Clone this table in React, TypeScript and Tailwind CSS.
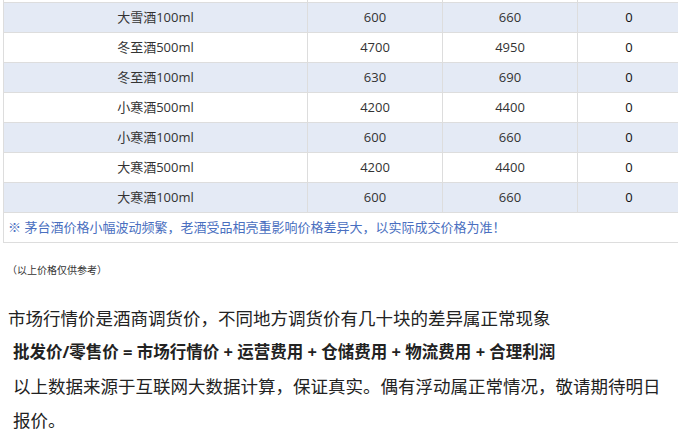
import React from 'react';

type Row = { name: string; a: string; b: string; c: string };

// first row is scrolled off the top; only its bottom border shows
const ROWS: Row[] = [
  { name: '', a: '', b: '', c: '' },
  { name: '大雪酒100ml', a: '600', b: '660', c: '0' },
  { name: '冬至酒500ml', a: '4700', b: '4950', c: '0' },
  { name: '冬至酒100ml', a: '630', b: '690', c: '0' },
  { name: '小寒酒500ml', a: '4200', b: '4400', c: '0' },
  { name: '小寒酒100ml', a: '600', b: '660', c: '0' },
  { name: '大寒酒500ml', a: '4200', b: '4400', c: '0' },
  { name: '大寒酒100ml', a: '600', b: '660', c: '0' },
];

const FONT = { fontFamily: '"Open Sans", "Noto Sans CJK SC", sans-serif' };

function PriceRow({ row, shaded }: { row: Row; shaded: boolean }) {
  return (
    <div
      className={`grid grid-cols-[304px_135px_135px_103px] h-[30px] text-[13px] text-[#333] ${
        shaded ? 'bg-[#e4eaf5]' : 'bg-white'
      }`}
    >
      <div className="flex items-center justify-center border-r border-b border-[#dddddd]">{row.name}</div>
      <div className="flex items-center justify-center border-r border-b border-[#dddddd]">{row.a}</div>
      <div className="flex items-center justify-center border-r border-b border-[#dddddd]">{row.b}</div>
      <div className="flex items-center justify-center border-r border-b border-[#dddddd] text-[#111]">{row.c}</div>
    </div>
  );
}

export default function App() {
  return (
    <div className="w-[678px] h-[436px] overflow-hidden bg-white" style={FONT}>
      {/* price table */}
      <div className="ml-[3px] mt-[-27px] w-[677px] border-l border-[#dddddd]">
        {ROWS.map((r, i) => (
          <PriceRow key={i} row={r} shaded={i % 2 === 1} />
        ))}
        <div className="h-[30px] flex items-center pl-[4px] border-r border-b border-[#dddddd] text-[13px] text-[#4a6fc0]">
          ※ 茅台酒价格小幅波动频繁，老酒受品相亮重影响价格差异大，以实际成交价格为准！
        </div>
      </div>

      <p className="mt-[17px] pl-[7px] text-[10px] leading-[20px] text-[#333]">（以上价格仅供参考）</p>

      <div className="mt-[21px] text-[17.5px] leading-[34px] text-[#222]">
        <p className="pl-[8px]">市场行情价是酒商调货价，不同地方调货价有几十块的差异属正常现象</p>
        <p className="pl-[13px] font-bold text-[16.5px] leading-[34px]">
          批发价/零售价 = 市场行情价 + 运营费用 + 仓储费用 + 物流费用 + 合理利润
        </p>
        <p className="pl-[13px] pr-[8px]">
          以上数据来源于互联网大数据计算，保证真实。偶有浮动属正常情况，敬请期待明日报价。
        </p>
      </div>
    </div>
  );
}
